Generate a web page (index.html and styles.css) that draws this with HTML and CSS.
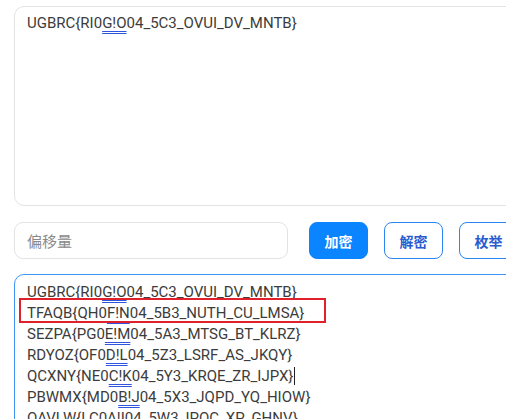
FILE: index.html
```html
<!DOCTYPE html>
<html lang="zh">
<head>
<meta charset="utf-8">
<link rel="stylesheet" href="styles.css">
</head>
<body>
<div class="page">
  <div class="box box-top">
    <div class="line">UGBRC{RI0<span class="mark">G!O</span>04_5C3_OVUI_DV_MNTB}</div>
  </div>
  <div class="controls">
    <div class="offset">偏移量</div>
    <button class="btn btn-primary">加密</button>
    <button class="btn btn-outline">解密</button>
    <button class="btn btn-outline">枚举</button>
  </div>
  <div class="box box-result">
    <div class="highlight"></div>
    <div class="line">UGBRC{RI0<span class="mark">G!O</span>04_5C3_OVUI_DV_MNTB}</div>
    <div class="line">TFAQB{QH0<span class="mark">F!N</span>04_5B3_NUTH_CU_LMSA}</div>
    <div class="line">SEZPA{PG0<span class="mark">E!M</span>04_5A3_MTSG_BT_KLRZ}</div>
    <div class="line">RDYOZ{OF0<span class="mark">D!L</span>04_5Z3_LSRF_AS_JKQY}</div>
    <div class="line">QCXNY{NE0<span class="mark">C!K</span>04_5Y3_KRQE_ZR_IJPX}<span class="caret"></span></div>
    <div class="line">PBWMX{MD0<span class="mark">B!J</span>04_5X3_JQPD_YQ_HIOW}</div>
    <div class="line">OAVLW{LC0<span class="mark">A!I</span>04_5W3_IPOC_XP_GHNV}</div>
  </div>
</div>
</body>
</html>
```
FILE: styles.css
```css
html, body {
  margin: 0;
  padding: 0;
  background: #fff;
  overflow: hidden;
}
body {
  width: 506px;
  height: 419px;
}
.page {
  padding: 6px 0 0 14px;
  width: 540px;
  font-family: Roboto, "Noto Sans CJK SC", sans-serif;
  color: #3c3c3c;
  font-size: 15px;
}
.box {
  box-sizing: border-box;
  border: 1px solid #e3e3e3;
  border-radius: 10px;
  padding: 6px 12px;
  line-height: 21px;
}
.box-top {
  height: 200px;
  width: 520px;
}
.line {
  white-space: nowrap;
  height: 21px;
}
.mark {
  text-decoration: underline double #2f55e0;
  text-underline-offset: 3px;
  text-decoration-thickness: 1px;
}
.controls {
  display: flex;
  align-items: center;
  margin-top: 16px;
  gap: 16px;
}
.offset {
  box-sizing: border-box;
  width: 274px;
  height: 37px;
  border: 1px solid #e3e3e3;
  border-radius: 9px;
  padding: 0 12px;
  line-height: 35px;
  color: #8a8a8a;
  font-size: 15px;
  font-family: "Noto Sans CJK SC", sans-serif;
  margin-right: 5px;
  flex: none;
}
.btn {
  box-sizing: border-box;
  width: 59px;
  height: 37px;
  border-radius: 8px;
  font-family: "Noto Sans CJK SC", sans-serif;
  font-size: 14px;
  font-weight: 700;
  padding: 0;
  flex: none;
}
.btn-primary {
  background: #0a84ff;
  border: 1px solid #0a84ff;
  color: #fff;
}
.btn-outline {
  background: #fff;
  border: 1px solid #2a86f0;
  color: #2b5bd0;
}
.box-result {
  position: relative;
  margin-top: 15px;
  width: 520px;
  height: 200px;
  border-color: #3f96f5;
  padding-top: 7px;
}
.highlight {
  position: absolute;
  left: 4px;
  top: 23px;
  width: 303px;
  height: 21px;
  border: 2px solid #e0202a;
}
.caret {
  display: inline-block;
  width: 1px;
  height: 18px;
  background: #222;
  vertical-align: -4px;
  margin-left: 1px;
}
```
